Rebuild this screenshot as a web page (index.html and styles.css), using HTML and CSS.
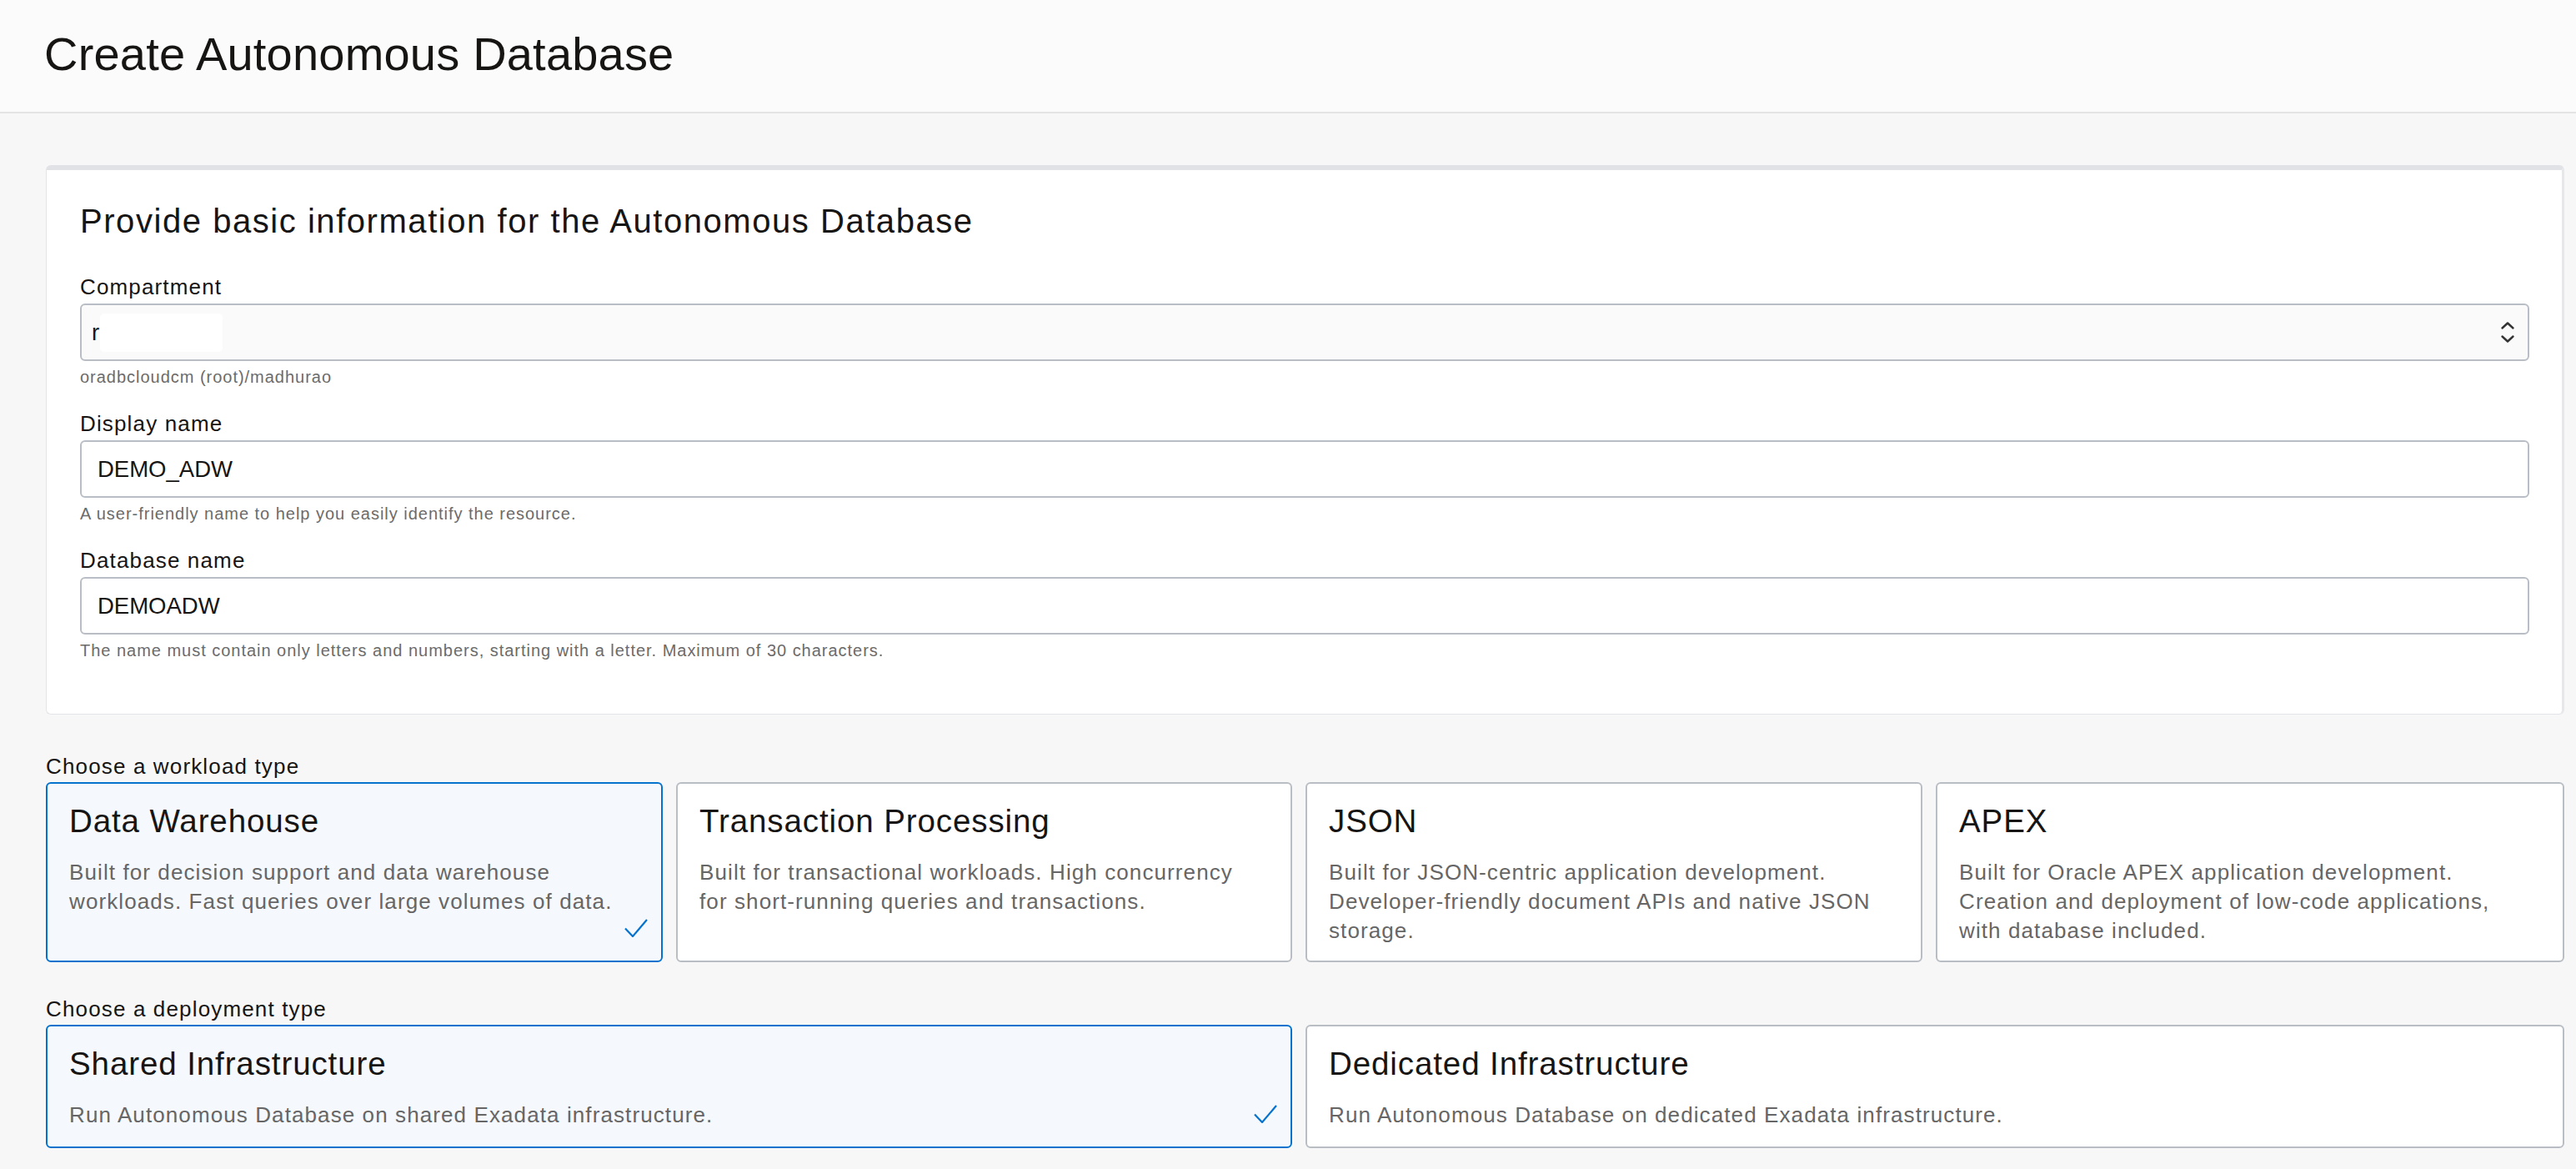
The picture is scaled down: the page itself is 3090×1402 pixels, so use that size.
FILE: index.html
```html
<!DOCTYPE html>
<html lang="en">
<head>
<meta charset="utf-8">
<title>Create Autonomous Database</title>
<link rel="stylesheet" href="styles.css">
</head>
<body>
<header class="page-header">
  <h1 class="page-title">Create Autonomous Database</h1>
</header>
<main class="content">
  <section class="card">
    <h2 class="card-heading">Provide basic information for the Autonomous Database</h2>

    <div class="field">
      <label class="field-label">Compartment</label>
      <div class="select">
        <span class="select-value">r<span class="redact"></span></span>
        <svg class="select-arrows" width="18" height="28" viewBox="0 0 18 28" aria-hidden="true">
          <path d="M2.5 8.5 L9 2.5 L15.5 8.5" />
          <path d="M2.5 18.5 L9 24.5 L15.5 18.5" />
        </svg>
      </div>
      <div class="hint">oradbcloudcm (root)/madhurao</div>
    </div>

    <div class="field">
      <label class="field-label" for="display-name">Display name</label>
      <input class="text-input" id="display-name" type="text" value="DEMO_ADW" readonly>
      <div class="hint">A user-friendly name to help you easily identify the resource.</div>
    </div>

    <div class="field">
      <label class="field-label" for="db-name">Database name</label>
      <input class="text-input" id="db-name" type="text" value="DEMOADW" readonly>
      <div class="hint">The name must contain only letters and numbers, starting with a letter. Maximum of 30 characters.</div>
    </div>
  </section>

  <section class="group group-workload">
    <div class="group-label">Choose a workload type</div>
    <div class="tiles tiles-4">
      <div class="tile is-selected">
        <div class="tile-title">Data Warehouse</div>
        <div class="tile-desc">Built for decision support and data warehouse workloads. Fast queries over large volumes of data.</div>
        <svg class="tile-check" width="28" height="22" viewBox="0 0 28 22" aria-hidden="true"><path d="M1 11.5 L10 21 L27 1" /></svg>
      </div>
      <div class="tile">
        <div class="tile-title">Transaction Processing</div>
        <div class="tile-desc">Built for transactional workloads. High concurrency for short-running queries and transactions.</div>
      </div>
      <div class="tile">
        <div class="tile-title">JSON</div>
        <div class="tile-desc">Built for JSON-centric application development. Developer-friendly document APIs and native JSON storage.</div>
      </div>
      <div class="tile">
        <div class="tile-title">APEX</div>
        <div class="tile-desc">Built for Oracle APEX application development. Creation and deployment of low-code applications, with database included.</div>
      </div>
    </div>
  </section>

  <section class="group group-deploy">
    <div class="group-label">Choose a deployment type</div>
    <div class="tiles tiles-2">
      <div class="tile is-selected">
        <div class="tile-title">Shared Infrastructure</div>
        <div class="tile-desc">Run Autonomous Database on shared Exadata infrastructure.</div>
        <svg class="tile-check" width="28" height="22" viewBox="0 0 28 22" aria-hidden="true"><path d="M1 11.5 L10 21 L27 1" /></svg>
      </div>
      <div class="tile">
        <div class="tile-title">Dedicated Infrastructure</div>
        <div class="tile-desc">Run Autonomous Database on dedicated Exadata infrastructure.</div>
      </div>
    </div>
  </section>
</main>
</body>
</html>
```

FILE: styles.css
```css
* {
  box-sizing: border-box;
}

html, body {
  margin: 0;
  padding: 0;
}

body {
  background: #f7f7f7;
  color: #161513;
  font-family: "Liberation Sans", Arial, Helvetica, sans-serif;
}

.page-header {
  background: #fbfbfb;
  border-bottom: 2px solid #e4e4e4;
  padding: 33px 53px 37px;
}

.page-title {
  margin: 0;
  font-size: 56px;
  line-height: 64px;
  font-weight: 400;
  letter-spacing: 0.2px;
  color: #161513;
}

.content {
  padding: 62px 14px 40px 55px;
}

.card {
  background: #ffffff;
  border: 1px solid #e3e4e8;
  border-top: 6px solid #e1e2e6;
  border-right: 3px solid #e6e7ea;
  border-radius: 6px;
  padding: 38px 39px 63px 40px;
}

.card-heading {
  margin: 0 0 40px;
  font-size: 40px;
  line-height: 46px;
  font-weight: 400;
  letter-spacing: 1.55px;
  color: #161513;
}

.field {
  margin-bottom: 27px;
}

.field:last-child {
  margin-bottom: 0;
}

.field-label,
.group-label {
  display: block;
  font-size: 26px;
  line-height: 32px;
  letter-spacing: 1.15px;
  color: #161513;
}

.field-label {
  margin-bottom: 4px;
}

.group-label {
  margin-bottom: 3px;
}

.select,
.text-input {
  display: flex;
  align-items: center;
  width: 100%;
  height: 69px;
  border: 2px solid #b9bdc5;
  border-radius: 6px;
  font-family: "Liberation Sans", Arial, Helvetica, sans-serif;
  font-size: 27.5px;
  color: #161513;
}

.select {
  justify-content: space-between;
  background: #fafafa;
  padding: 0 15px 0 12px;
}

.select-value {
  display: flex;
  align-items: center;
}

.redact {
  display: inline-block;
  width: 147px;
  height: 46px;
  margin-left: 1px;
  background: #ffffff;
  border-radius: 5px;
}

.select-arrows path {
  fill: none;
  stroke: #333333;
  stroke-width: 2.4;
  stroke-linecap: round;
  stroke-linejoin: round;
}

.text-input {
  background: #ffffff;
  padding: 0 19px;
  outline: none;
}

.hint {
  margin-top: 6px;
  font-size: 20px;
  line-height: 26px;
  letter-spacing: 0.98px;
  color: #6b6b6b;
}

.group-workload {
  margin-top: 46px;
}

.group-deploy {
  margin-top: 40px;
}

.tiles {
  display: grid;
  gap: 16px;
}

.tiles-4 {
  grid-template-columns: 740px 739px 740px 1fr;
}

.tiles-2 {
  grid-template-columns: 1495px 1fr;
}

.tile {
  position: relative;
  background: #ffffff;
  border: 2px solid #b9bdc4;
  border-radius: 6px;
  padding: 22px 46px 18px 26px;
}

.tiles-2 .tile {
  padding-bottom: 20px;
}

.tile.is-selected {
  background: #f5f8fc;
  border-color: #0572ce;
}

.tile-title {
  font-size: 38.5px;
  line-height: 46px;
  letter-spacing: 0.9px;
  color: #161513;
  margin-bottom: 21px;
}

.tile-desc {
  font-size: 26px;
  line-height: 35px;
  letter-spacing: 1.1px;
  color: #666666;
}

.tile-check {
  position: absolute;
  right: 16px;
  bottom: 28px;
}

.tile-check path {
  fill: none;
  stroke: #0572ce;
  stroke-width: 2.2;
}
```
